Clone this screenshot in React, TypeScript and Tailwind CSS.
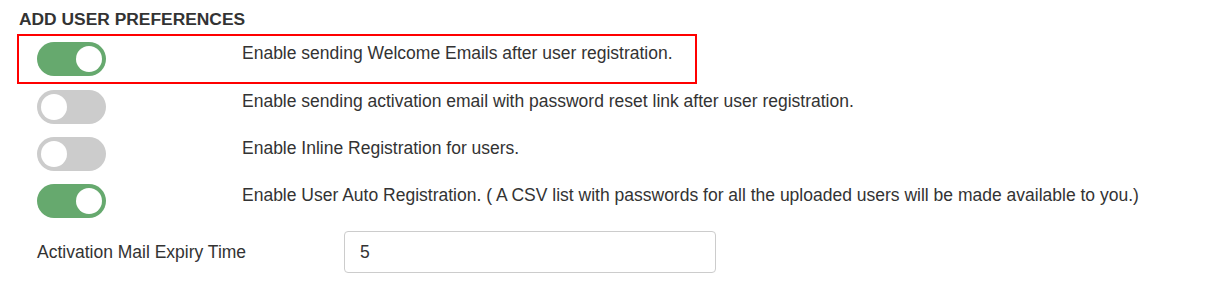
import React, { useState } from "react";

interface Pref {
  id: string;
  label: string;
  on: boolean;
  highlight?: boolean;
}

const initialPrefs: Pref[] = [
  {
    id: "welcome",
    label: "Enable sending Welcome Emails after user registration.",
    on: true,
    highlight: true,
  },
  {
    id: "activation",
    label:
      "Enable sending activation email with password reset link after user registration.",
    on: false,
  },
  {
    id: "inline",
    label: "Enable Inline Registration for users.",
    on: false,
  },
  {
    id: "auto",
    label:
      "Enable User Auto Registration. ( A CSV list with passwords for all the uploaded users will be made available to you.)",
    on: true,
  },
];

const Toggle = ({ on, onClick }: { on: boolean; onClick: () => void }) => (
  <button
    type="button"
    onClick={onClick}
    className={`flex items-center w-[69px] h-[34px] rounded-full px-[4px] shrink-0 ${
      on ? "bg-[#66a96e] justify-end" : "bg-[#cccccc] justify-start"
    }`}
  >
    <span className="block w-[26px] h-[26px] rounded-full bg-white" />
  </button>
);

const PrefRow = ({ pref, onToggle }: { pref: Pref; onToggle: () => void }) => (
  <div className="flex items-start h-[47px] pt-[6px] pl-[20px]">
    <div className="w-[205px] shrink-0">
      <Toggle on={pref.on} onClick={onToggle} />
    </div>
    <span className="text-[17.5px] leading-[22px] text-[#333333] whitespace-nowrap">
      {pref.label}
    </span>
  </div>
);

export default function App() {
  const [prefs, setPrefs] = useState(initialPrefs);
  const [expiry, setExpiry] = useState("5");

  const toggle = (id: string) =>
    setPrefs((p) => p.map((x) => (x.id === id ? { ...x, on: !x.on } : x)));

  return (
    <div className="w-[1208px] h-[282px] bg-white px-[17px] pt-[8px] font-['Liberation_Sans',Arial,sans-serif] text-[#333333]">
      <h3 className="pl-[2px] text-[17.4px] leading-[22px] font-bold uppercase text-[#333333]">
        Add User Preferences
      </h3>

      <div className="mt-[4px]">
        {prefs.map((pref) =>
          pref.highlight ? (
            <div
              key={pref.id}
              className="w-[680px] border-2 border-[#ff0000] [&>div]:h-[46px] [&>div]:pl-[18px]"
            >
              <PrefRow pref={pref} onToggle={() => toggle(pref.id)} />
            </div>
          ) : (
            <PrefRow key={pref.id} pref={pref} onToggle={() => toggle(pref.id)} />
          )
        )}
      </div>

      <div className="flex items-center mt-[6px] pl-[20px]">
        <label className="w-[307px] text-[17.5px] text-[#333333]">
          Activation Mail Expiry Time
        </label>
        <input
          value={expiry}
          onChange={(e) => setExpiry(e.target.value)}
          className="w-[372px] h-[42px] rounded-[4px] border border-[#cccccc] px-[15px] text-[17.5px] text-[#333333] outline-none"
        />
      </div>
    </div>
  );
}
